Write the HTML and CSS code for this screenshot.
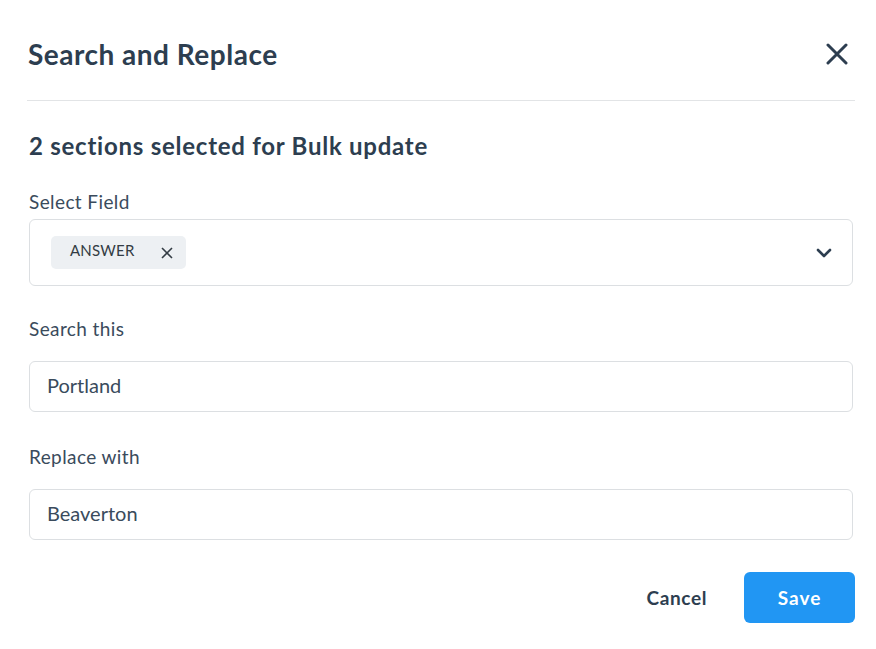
FILE: index.html
```html
<!DOCTYPE html>
<html lang="en">
<head>
<meta charset="utf-8">
<title>Search and Replace</title>
<link rel="stylesheet" href="styles.css">
</head>
<body>
<div class="modal">
  <div class="header">
    <h1 class="title">Search and Replace</h1>
    <button class="close" aria-label="Close">
      <svg width="22" height="22" viewBox="0 0 22 22"><path d="M2 2L20 20M20 2L2 20" stroke="#2d3e50" stroke-width="3" stroke-linecap="round" fill="none"/></svg>
    </button>
  </div>
  <h2 class="subtitle">2 sections selected for Bulk update</h2>

  <div class="field">
    <label class="label label-select">Select Field</label>
    <div class="select">
      <span class="chip">ANSWER
        <svg class="chip-x" width="12" height="12" viewBox="0 0 12 12"><path d="M1 1L11 11M11 1L1 11" stroke="#333c44" stroke-width="1.6" fill="none"/></svg>
      </span>
      <svg class="chevron" width="16" height="10" viewBox="0 0 16 10"><path d="M2 2L8 8L14 2" stroke="#2d3e50" stroke-width="2.6" stroke-linecap="round" stroke-linejoin="round" fill="none"/></svg>
    </div>
  </div>

  <div class="field">
    <label class="label">Search this</label>
    <div class="input">Portland</div>
  </div>

  <div class="field">
    <label class="label">Replace with</label>
    <div class="input">Beaverton</div>
  </div>

  <div class="footer">
    <button class="btn-cancel">Cancel</button>
    <button class="btn-save">Save</button>
  </div>
</div>
</body>
</html>
```
FILE: styles.css
```css
* { box-sizing: border-box; }
body {
  margin: 0;
  background: #ffffff;
  font-family: "Lato", "Liberation Sans", sans-serif;
  color: #2d3e50;
}
.modal {
  padding: 0 21px 0 27px;
}
.header {
  height: 101px;
  padding-top: 8px;
  display: flex;
  align-items: center;
  justify-content: space-between;
  border-bottom: 1px solid #e2e4e6;
}
.title {
  margin: 0 0 0 1px;
  font-size: 28px;
  letter-spacing: 0.5px;
  font-weight: 700;
  color: #2d3e50;
}
.close {
  border: 0;
  background: none;
  padding: 0;
  margin-right: 7px;
  display: flex;
}
.subtitle {
  margin: 30px 0 0 2px;
  font-size: 24px;
  letter-spacing: 0.75px;
  line-height: 30px;
  font-weight: 700;
  color: #2d3e50;
}
.field {
  margin: 0 2px;
}
.label {
  display: block;
  font-size: 19px;
  letter-spacing: 0.4px;
  line-height: 24px;
  color: #3a4b5c;
  margin-top: 29px;
  margin-bottom: 20px;
}
.label-select {
  margin-bottom: 5px;
}
.field + .field .label {
  margin-top: 31px;
}
.select {
  border: 1px solid #dcdfe2;
  border-radius: 6px;
  padding: 16px 21px;
  display: flex;
  align-items: center;
  justify-content: space-between;
}
.chip {
  height: 33px;
  background: #edf0f3;
  border-radius: 5px;
  display: inline-flex;
  align-items: center;
  padding: 0 13px 5px 19px;
  font-size: 15px;
  color: #333c44;
  letter-spacing: 0.2px;
}
.chip-x {
  margin-left: 26px;
  margin-top: 5px;
}
.chevron {
  margin-right: -1px;
}
.input {
  height: 51px;
  border: 1px solid #dcdfe2;
  border-radius: 6px;
  padding: 0 17px 3px;
  display: flex;
  align-items: center;
  font-size: 20px;
  color: #3a4b5c;
}
.field + .field + .field .label {
  margin-top: 33px;
}
.footer {
  margin-top: 32px;
  display: flex;
  justify-content: flex-end;
  align-items: center;
}
.btn-cancel {
  border: 0;
  background: none;
  font-family: inherit;
  font-size: 19px;
  letter-spacing: 0.6px;
  font-weight: 700;
  color: #2d3e50;
  padding: 0;
  margin-right: 37px;
}
.btn-save {
  width: 111px;
  height: 51px;
  border: 0;
  border-radius: 6px;
  background: #2196f3;
  color: #ffffff;
  font-family: inherit;
  font-size: 19px;
  letter-spacing: 1px;
  font-weight: 700;
}
```
